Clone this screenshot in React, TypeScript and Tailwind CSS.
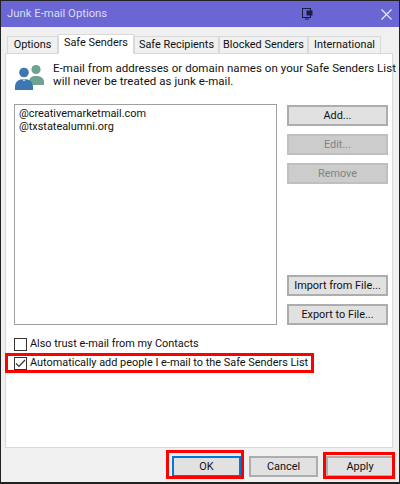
const font = { fontFamily: 'Roboto, "Noto Sans", sans-serif' };

function Tab({ label, active, w }: { label: string; active?: boolean; w: string }) {
  if (active) {
    return (
      <div className={`${w} relative z-10 mb-[-1px] flex h-[20px] items-center justify-center whitespace-nowrap border border-b-0 border-[#d9d9d9] bg-white pb-[3px]`}>
        {label}
      </div>
    );
  }
  return (
    <div className={`${w} flex h-[17px] items-center justify-center whitespace-nowrap border border-b-0 border-[#d9d9d9] bg-[#f0f0f0]`}>
      {label}
    </div>
  );
}

function SideButton({ label, disabled }: { label: string; disabled?: boolean }) {
  return (
    <button
      type="button"
      className={`flex h-[21px] w-[101px] items-center justify-center whitespace-nowrap border-2 pt-px ${
        disabled ? 'border-[#bfbfbf] bg-[#cccccc] text-[#838383]' : 'border-[#adadad] bg-[#e1e1e1] text-[#111]'
      }`}
    >
      {label}
    </button>
  );
}

function FooterButton({ label, focused, w = 'w-[69px]' }: { label: string; focused?: boolean; w?: string }) {
  return (
    <button
      type="button"
      className={`flex h-[21px] ${w} items-center justify-center border-2 bg-[#e1e1e1] pt-px text-[#111] ${
        focused ? 'border-[#0078d7]' : 'border-[#adadad]'
      }`}
    >
      {label}
    </button>
  );
}

function CheckBox({ checked }: { checked?: boolean }) {
  return (
    <span className="flex h-[13px] w-[13px] shrink-0 items-center justify-center border border-[#333] bg-white">
      {checked && (
        <svg width="11" height="11" viewBox="0 0 11 11" fill="none" stroke="#333" strokeWidth="1.2">
          <path d="M1 5.5l3 3L10 2" />
        </svg>
      )}
    </span>
  );
}

function PeopleIcon() {
  return (
    <svg width="30" height="30" viewBox="0 0 30 30">
      <circle cx="21" cy="6.5" r="4.6" fill="#6ea38f" />
      <path d="M14 18.5c0-3.5 2.5-5.5 7-5.5s8 2 8 5.5V22H18z" fill="#6ea38f" />
      <circle cx="9" cy="9.5" r="4.8" fill="#3c77b2" />
      <path d="M0 23.5c0-4.5 3.5-7.5 9-7.5s9 3 9 7.5V27H0z" fill="#3c77b2" />
      <path d="M7.5 16.5l1.5 2 1.5-2z" fill="#e6eef5" />
    </svg>
  );
}

export default function App() {
  return (
    <div style={font} className="flex h-[484px] w-[400px] flex-col overflow-hidden border-x border-b-2 border-t border-[#222] bg-[#f0f0f0] text-[10.9px] text-[#111]">
      {/* Title bar */}
      <div className="flex h-[26px] shrink-0 items-center bg-[#6a66d3] pl-[6px] pr-[7px] text-[11.3px] text-[#dcdcf2]">
        <span>Junk E-mail Options</span>
        <svg className="ml-[194px]" width="12" height="12" viewBox="0 0 12 12" fill="none" stroke="#1c1c40" strokeWidth="1">
          <rect x="1.5" y="0.5" width="8" height="9" />
          <rect x="6" y="3" width="5" height="4" fill="#1c1c40" />
          <path d="M4 11h4" />
        </svg>
        <svg className="ml-auto" width="11" height="11" viewBox="0 0 11 11" stroke="#e8e8f8" strokeWidth="1.2">
          <path d="M0.5 0.5l10 10M10.5 0.5l-10 10" />
        </svg>
      </div>

      <div className="flex min-h-0 flex-1 flex-col pl-[4px] pr-[6px] pt-[7px]">
        {/* Tabs */}
        <div className="flex h-[19px] shrink-0 items-end pl-[2px]">
          <Tab label="Options" w="w-[51px]" />
          <Tab label="Safe Senders" w="w-[76px]" active />
          <Tab label="Safe Recipients" w="w-[85px]" />
          <Tab label="Blocked Senders" w="w-[89px]" />
          <Tab label="International" w="w-[73px]" />
        </div>

        {/* Panel */}
        <div className="flex h-[395px] shrink-0 flex-col border border-[#d9d9d9] bg-white pl-[8px] pr-[4px]">
          <div className="flex h-[50px] shrink-0 items-start pt-[8px]">
            <div className="ml-[1px] mr-[8px] mt-[1px] shrink-0">
              <PeopleIcon />
            </div>
            <p className="whitespace-nowrap text-[11.5px] leading-[12.5px] tracking-[0.05px]">
              E-mail from addresses or domain names on your Safe Senders List
              <br />
              will never be treated as junk e-mail.
            </p>
          </div>

          <div className="flex h-[221px] shrink-0 justify-between">
            <div className="w-[263px] border border-[#a0a0a0] pl-[4px] pt-[2px] leading-[13px]">
              <div>@creativemarketmail.com</div>
              <div>@txstatealumni.org</div>
            </div>
            <div className="flex flex-col gap-[8px] pt-[1px]">
              <SideButton label="Add..." />
              <SideButton label="Edit..." disabled />
              <SideButton label="Remove" disabled />
              <div className="mt-auto flex flex-col gap-[8px]">
                <SideButton label="Import from File..." />
                <SideButton label="Export to File..." />
              </div>
            </div>
          </div>

          <div className="mt-[13px] flex h-[13px] items-center gap-[3px]">
            <CheckBox />
            <span>Also trust e-mail from my Contacts</span>
          </div>
          <div className="relative mt-[6px] flex h-[13px] items-center gap-[3px]">
            <CheckBox checked />
            <span className="whitespace-nowrap">Automatically add people I e-mail to the Safe Senders List</span>
            <div className="absolute left-[-9px] top-[-4px] h-[20px] w-[309px] border-[3px] border-[#fe0000]" />
          </div>
        </div>

        {/* Footer buttons */}
        <div className="mr-[-1px] flex flex-1 items-start justify-end gap-[8px] pt-[8px]">
          <div className="relative">
            <FooterButton label="OK" focused />
            <div className="absolute left-[-6px] top-[-6px] h-[29px] w-[78px] border-[3px] border-[#fe0000]" />
          </div>
          <FooterButton label="Cancel" />
          <div className="relative">
            <FooterButton label="Apply" w="w-[68px]" />
            <div className="absolute left-[-3px] top-[-4px] h-[27px] w-[72px] border-[3px] border-[#fe0000]" />
          </div>
        </div>
      </div>
    </div>
  );
}
